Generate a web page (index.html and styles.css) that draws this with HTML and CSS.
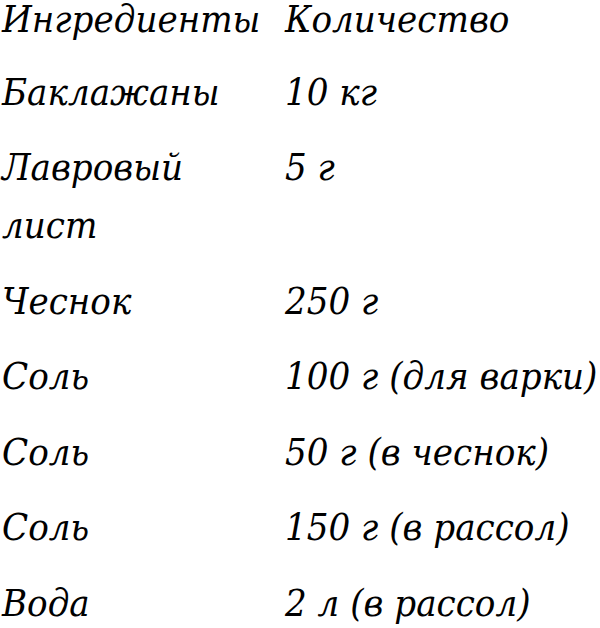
FILE: index.html
```html
<!DOCTYPE html>
<html lang="ru">
<head>
<meta charset="utf-8">
<link rel="stylesheet" href="styles.css">
</head>
<body>
<div class="recipe">
  <div class="name head">Ингредиенты</div><div class="qty head">Количество</div>
  <div class="name">Баклажаны</div><div class="qty">10 кг</div>
  <div class="name">Лавровый лист</div><div class="qty">5 г</div>
  <div class="name">Чеснок</div><div class="qty">250 г</div>
  <div class="name">Соль</div><div class="qty">100 г (для варки)</div>
  <div class="name">Соль</div><div class="qty">50 г (в чеснок)</div>
  <div class="name">Соль</div><div class="qty">150 г (в рассол)</div>
  <div class="name">Вода</div><div class="qty">2 л (в рассол)</div>
</div>
</body>
</html>
```
FILE: styles.css
```css
html, body {
  margin: 0;
  padding: 0;
  background: #fff;
}
body {
  font-family: "DejaVu Serif Condensed", "DejaVu Serif", serif;
  font-stretch: condensed;
  font-style: italic;
  font-size: 38px;
  color: #000;
  overflow: hidden;
}
.recipe {
  display: grid;
  grid-template-columns: 283px 1fr;
  row-gap: 17.5px;
  padding-left: 2px;
}
.name, .qty {
  line-height: 58px;
}
.head {
  line-height: 36px;
  padding-top: 1px;
  padding-bottom: 8px;
}
.name {
  padding-right: 40px;
}
.qty {
  white-space: nowrap;
}
```
